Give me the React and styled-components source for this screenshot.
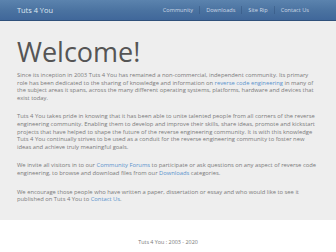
import React from 'react'
import styled, { createGlobalStyle } from 'styled-components'

const GlobalStyle = createGlobalStyle`
  html, body {
    margin: 0;
    padding: 0;
    background: #ffffff;
    font-family: "Open Sans", "Liberation Sans", sans-serif;
  }
`

const Navbar = styled.div`
  height: 20px;
  display: flex;
  align-items: center;
  justify-content: space-between;
  padding: 0 21px 0 17px;
  background: linear-gradient(to bottom, #5b83ae 0%, #4a72a0 55%, #40679a 100%);
  border-bottom: 1px solid #2f507a;
`

const Brand = styled.a`
  font-size: 7.4px;
  color: #dfe7f1;
  text-decoration: none;
`

const NavLinks = styled.div`
  display: flex;
  align-items: center;
`

const NavLink = styled.a`
  font-size: 5.6px;
  color: #cdd8e6;
  text-decoration: none;
  padding: 0 6px;
  border-left: ${p => (p.first ? 'none' : '1px solid rgba(40, 70, 110, 0.35)')};
`

const Jumbotron = styled.div`
  background: #eeeeee;
  padding: 15px 16px 16px 17px;
`

const Heading = styled.h1`
  margin: 0 0 5px;
  font-size: 27px;
  line-height: 1.15;
  font-weight: 400;
  color: #555555;
`

const Para = styled.p`
  margin: 0 0 11px;
  font-size: 5.82px;
  line-height: 7.6px;
  color: #7a7a7a;

  &:last-child {
    margin-bottom: 0;
  }
`

const Link = styled.a`
  color: #5a92cc;
  text-decoration: none;
`

const Footer = styled.div`
  text-align: center;
  font-size: 5.4px;
  color: #777777;
  padding-top: 18px;
`

export default function App() {
  return (
    <>
      <GlobalStyle />
      <Navbar>
        <Brand>Tuts 4 You</Brand>
        <NavLinks>
          <NavLink first>Community</NavLink>
          <NavLink>Downloads</NavLink>
          <NavLink>Site Rip</NavLink>
          <NavLink>Contact Us</NavLink>
        </NavLinks>
      </Navbar>
      <Jumbotron>
        <Heading>Welcome!</Heading>
        <Para>
          Since its inception in 2003 Tuts 4 You has remained a non-commercial, independent community. Its primary
          role has been dedicated to the sharing of knowledge and information on{' '}
          <Link>reverse code engineering</Link> in many of the subject areas it spans, across the many different
          operating systems, platforms, hardware and devices that exist today.
        </Para>
        <Para>
          Tuts 4 You takes pride in knowing that it has been able to unite talented people from all corners of the
          reverse engineering community. Enabling them to develop and improve their skills, share ideas, promote and
          kickstart projects that have helped to shape the future of the reverse engineering community. It is with
          this knowledge Tuts 4 You continually strives to be used as a conduit for the reverse engineering community
          to foster new ideas and achieve truly meaningful goals.
        </Para>
        <Para>
          We invite all visitors in to our <Link>Community Forums</Link> to participate or ask questions on any aspect
          of reverse code engineering, to browse and download files from our <Link>Downloads</Link> categories.
        </Para>
        <Para>
          We encourage those people who have written a paper, dissertation or essay and who would like to see it
          published on Tuts 4 You to <Link>Contact Us</Link>.
        </Para>
      </Jumbotron>
      <Footer>Tuts 4 You : 2003 - 2020</Footer>
    </>
  )
}
